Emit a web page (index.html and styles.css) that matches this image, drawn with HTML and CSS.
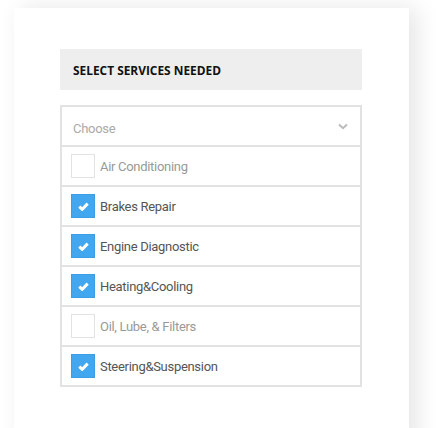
FILE: index.html
```html
<!DOCTYPE html>
<html>
<head>
<meta charset="utf-8">
<link rel="stylesheet" href="styles.css">
</head>
<body>
<div class="card">
  <div class="title">SELECT SERVICES NEEDED</div>
  <div class="box">
    <div class="row choose">
      <span class="lbl-choose">Choose</span>
      <svg class="chev" width="10" height="7" viewBox="0 0 10 7"><path d="M1 1.5 L5 5.2 L9 1.5" fill="none" stroke="#bbb" stroke-width="2"/></svg>
    </div>
    <div class="row"><span class="cb"></span><span class="lbl off">Air Conditioning</span></div>
    <div class="row"><span class="cb on"><svg width="11" height="9" viewBox="0 0 11 9"><path d="M1.3 4.6 L4.2 7.3 L9.7 1.6" fill="none" stroke="#fff" stroke-width="3"/></svg></span><span class="lbl">Brakes Repair</span></div>
    <div class="row"><span class="cb on"><svg width="11" height="9" viewBox="0 0 11 9"><path d="M1.3 4.6 L4.2 7.3 L9.7 1.6" fill="none" stroke="#fff" stroke-width="3"/></svg></span><span class="lbl">Engine Diagnostic</span></div>
    <div class="row"><span class="cb on"><svg width="11" height="9" viewBox="0 0 11 9"><path d="M1.3 4.6 L4.2 7.3 L9.7 1.6" fill="none" stroke="#fff" stroke-width="3"/></svg></span><span class="lbl">Heating&amp;Cooling</span></div>
    <div class="row"><span class="cb"></span><span class="lbl off">Oil, Lube, &amp; Filters</span></div>
    <div class="row"><span class="cb on"><svg width="11" height="9" viewBox="0 0 11 9"><path d="M1.3 4.6 L4.2 7.3 L9.7 1.6" fill="none" stroke="#fff" stroke-width="3"/></svg></span><span class="lbl">Steering&amp;Suspension</span></div>
  </div>
</div>
</body>
</html>
```
FILE: styles.css
```css
html, body { margin: 0; padding: 0; background: #fff; }
body { overflow: hidden; height: 428px; }
.card {
  margin: 8px 0 0 14px;
  width: 395px;
  height: 440px;
  background: #fff;
  box-shadow: 8px 0 22px rgba(0,0,0,0.10);
  padding: 41px 0 0 46px;
  box-sizing: border-box;
}
.title {
  width: 302px;
  height: 41px;
  background: #eeeeee;
  box-sizing: border-box;
  padding-left: 13px;
  display: flex;
  align-items: center;
  font-family: "Open Sans", sans-serif;
  font-weight: 700;
  font-size: 11.9px;
  color: #111;
}
.box {
  margin-top: 15px;
  width: 302px;
  border: 2px solid #e2e2e2;
  box-sizing: border-box;
}
.row {
  height: 40px;
  border-top: 2px solid #e2e2e2;
  box-sizing: border-box;
  display: flex;
  align-items: center;
  padding-left: 9px;
  font-family: Roboto, sans-serif;
  font-size: 13px;
  letter-spacing: -0.3px;
}
.row:first-child { border-top: 0; height: 38px; }
.choose {
  color: #aaa;
  padding-left: 11px;
  padding-right: 12px;
  justify-content: space-between;
}
.lbl-choose { padding-top: 4px; }
.chev { margin-top: 1px; }
.cb {
  width: 24px;
  height: 24px;
  box-sizing: border-box;
  border: 1px solid #e2e2e2;
  background: #fff;
  display: flex;
  align-items: center;
  justify-content: center;
  flex: none;
}
.cb.on { background: #42a7ef; border-color: #3a9ee6; }
.lbl { margin-left: 5px; color: #555; padding-top: 1px; }
.lbl.off { color: #999; }
```
